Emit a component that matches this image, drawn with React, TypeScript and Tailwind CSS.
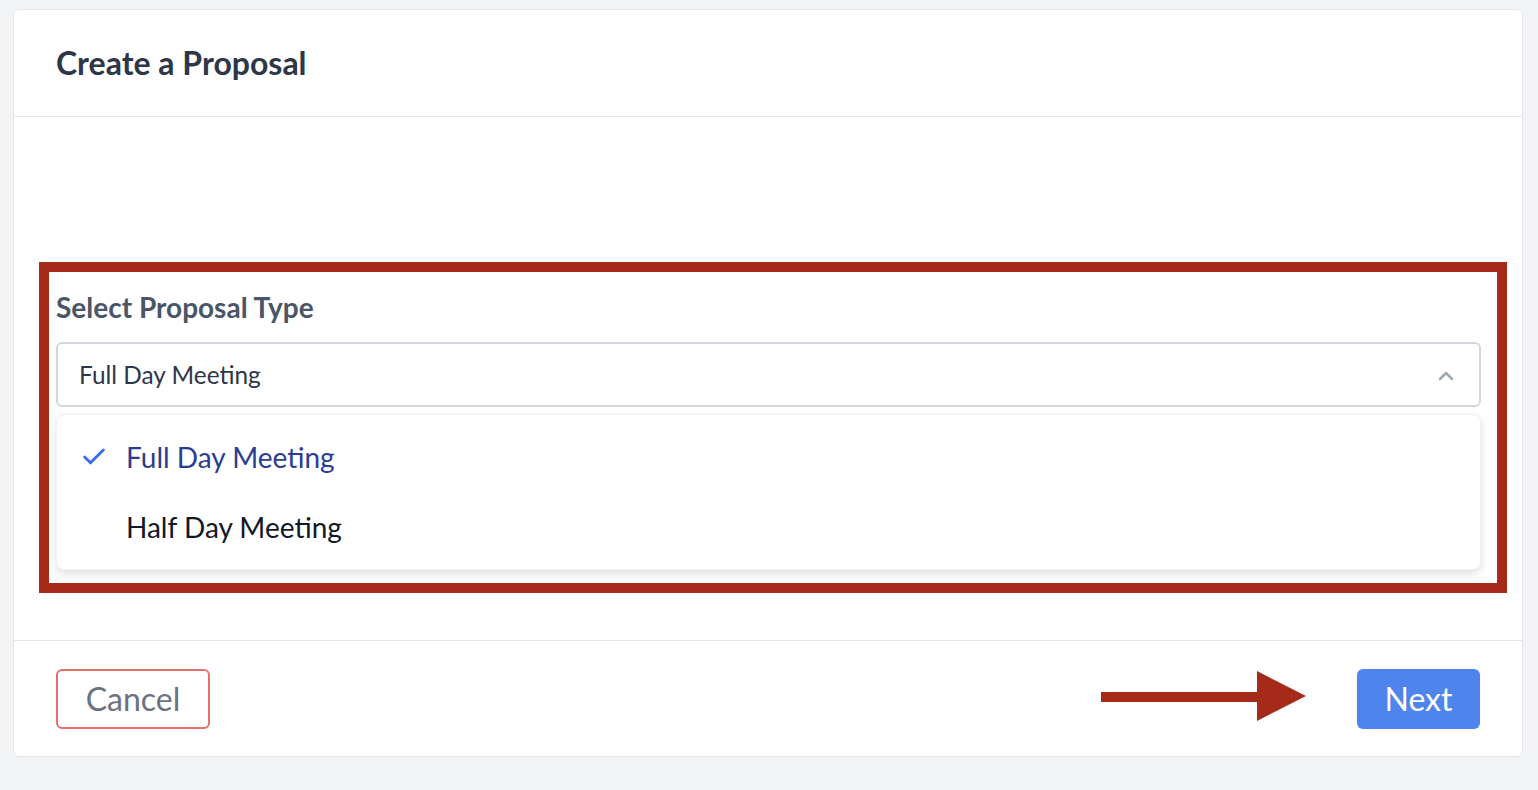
import React from "react";
import { Check, ChevronUp } from "lucide-react";

const options = ["Full Day Meeting", "Half Day Meeting"];

export default function App() {
  const selected = "Full Day Meeting";

  return (
    <div className="min-h-screen bg-[#f2f3f5] pt-[9px] pl-[13px] font-['Lato','Noto_Sans',sans-serif]">
      <div className="w-[1510px] rounded-md border border-[#e4e6ea] bg-white">
        {/* Header */}
        <div className="flex h-[107px] items-center border-b border-[#e4e6ea] px-[42px]">
          <h1 className="text-[32px] font-bold text-[#2d3748]">Create a Proposal</h1>
        </div>

        {/* Body */}
        <div className="pt-[145px] pb-[47px] pl-[25px] pr-[15px]">
          <div className="border-[10px] border-[#a52a1a] pt-[18px] pb-[13px] pl-[7px] pr-[16px]">
            <label className="block text-[28px] font-bold leading-[34px] text-[#4a5568]">
              Select Proposal Type
            </label>
            <div className="mt-[18px] flex h-[65px] items-center justify-between rounded-md border-2 border-[#d3d7dd] pt-[2px] pl-[21px] pr-[21px]">
              <span className="text-[24.4px] text-[#2d3748]">{selected}</span>
              <ChevronUp className="h-6 w-6 text-[#a0a8b8]" strokeWidth={2.5} />
            </div>
            <div className="mt-[7px] rounded-lg border border-[#eef0f2] bg-white py-[7px] shadow-[0_4px_10px_rgba(0,0,0,0.12)]">
              {options.map((o) => (
                <div key={o} className="flex h-[70px] items-center pl-[23px]">
                  <div className="w-[46px]">
                    {o === selected && <Check className="h-7 w-7 text-[#3b6cf0]" strokeWidth={2.5} />}
                  </div>
                  <span className={o === selected ? "text-[28px] text-[#2b3d8f]" : "text-[28px] text-[#111827]"}>
                    {o}
                  </span>
                </div>
              ))}
            </div>
          </div>
        </div>

        {/* Footer */}
        <div className="flex items-center justify-between border-t border-[#e4e6ea] pt-[28px] pb-[27px] pl-[42px] pr-[42px]">
          <button className="h-[60px] w-[154px] rounded-md border-2 border-[#e4726b] text-[32px] text-[#6b7280]">
            Cancel
          </button>
          <div className="flex items-center">
            <svg width="206" height="50" viewBox="0 0 206 50" className="mb-[7px]">
              <rect x="0" y="21" width="158" height="10" fill="#a52a1a" />
              <polygon points="156,0 205,25 156,50" fill="#a52a1a" />
            </svg>
            <button className="ml-[50px] h-[60px] w-[123px] rounded-md bg-[#4f84ec] text-[32px] text-white">
              Next
            </button>
          </div>
        </div>
      </div>
    </div>
  );
}
